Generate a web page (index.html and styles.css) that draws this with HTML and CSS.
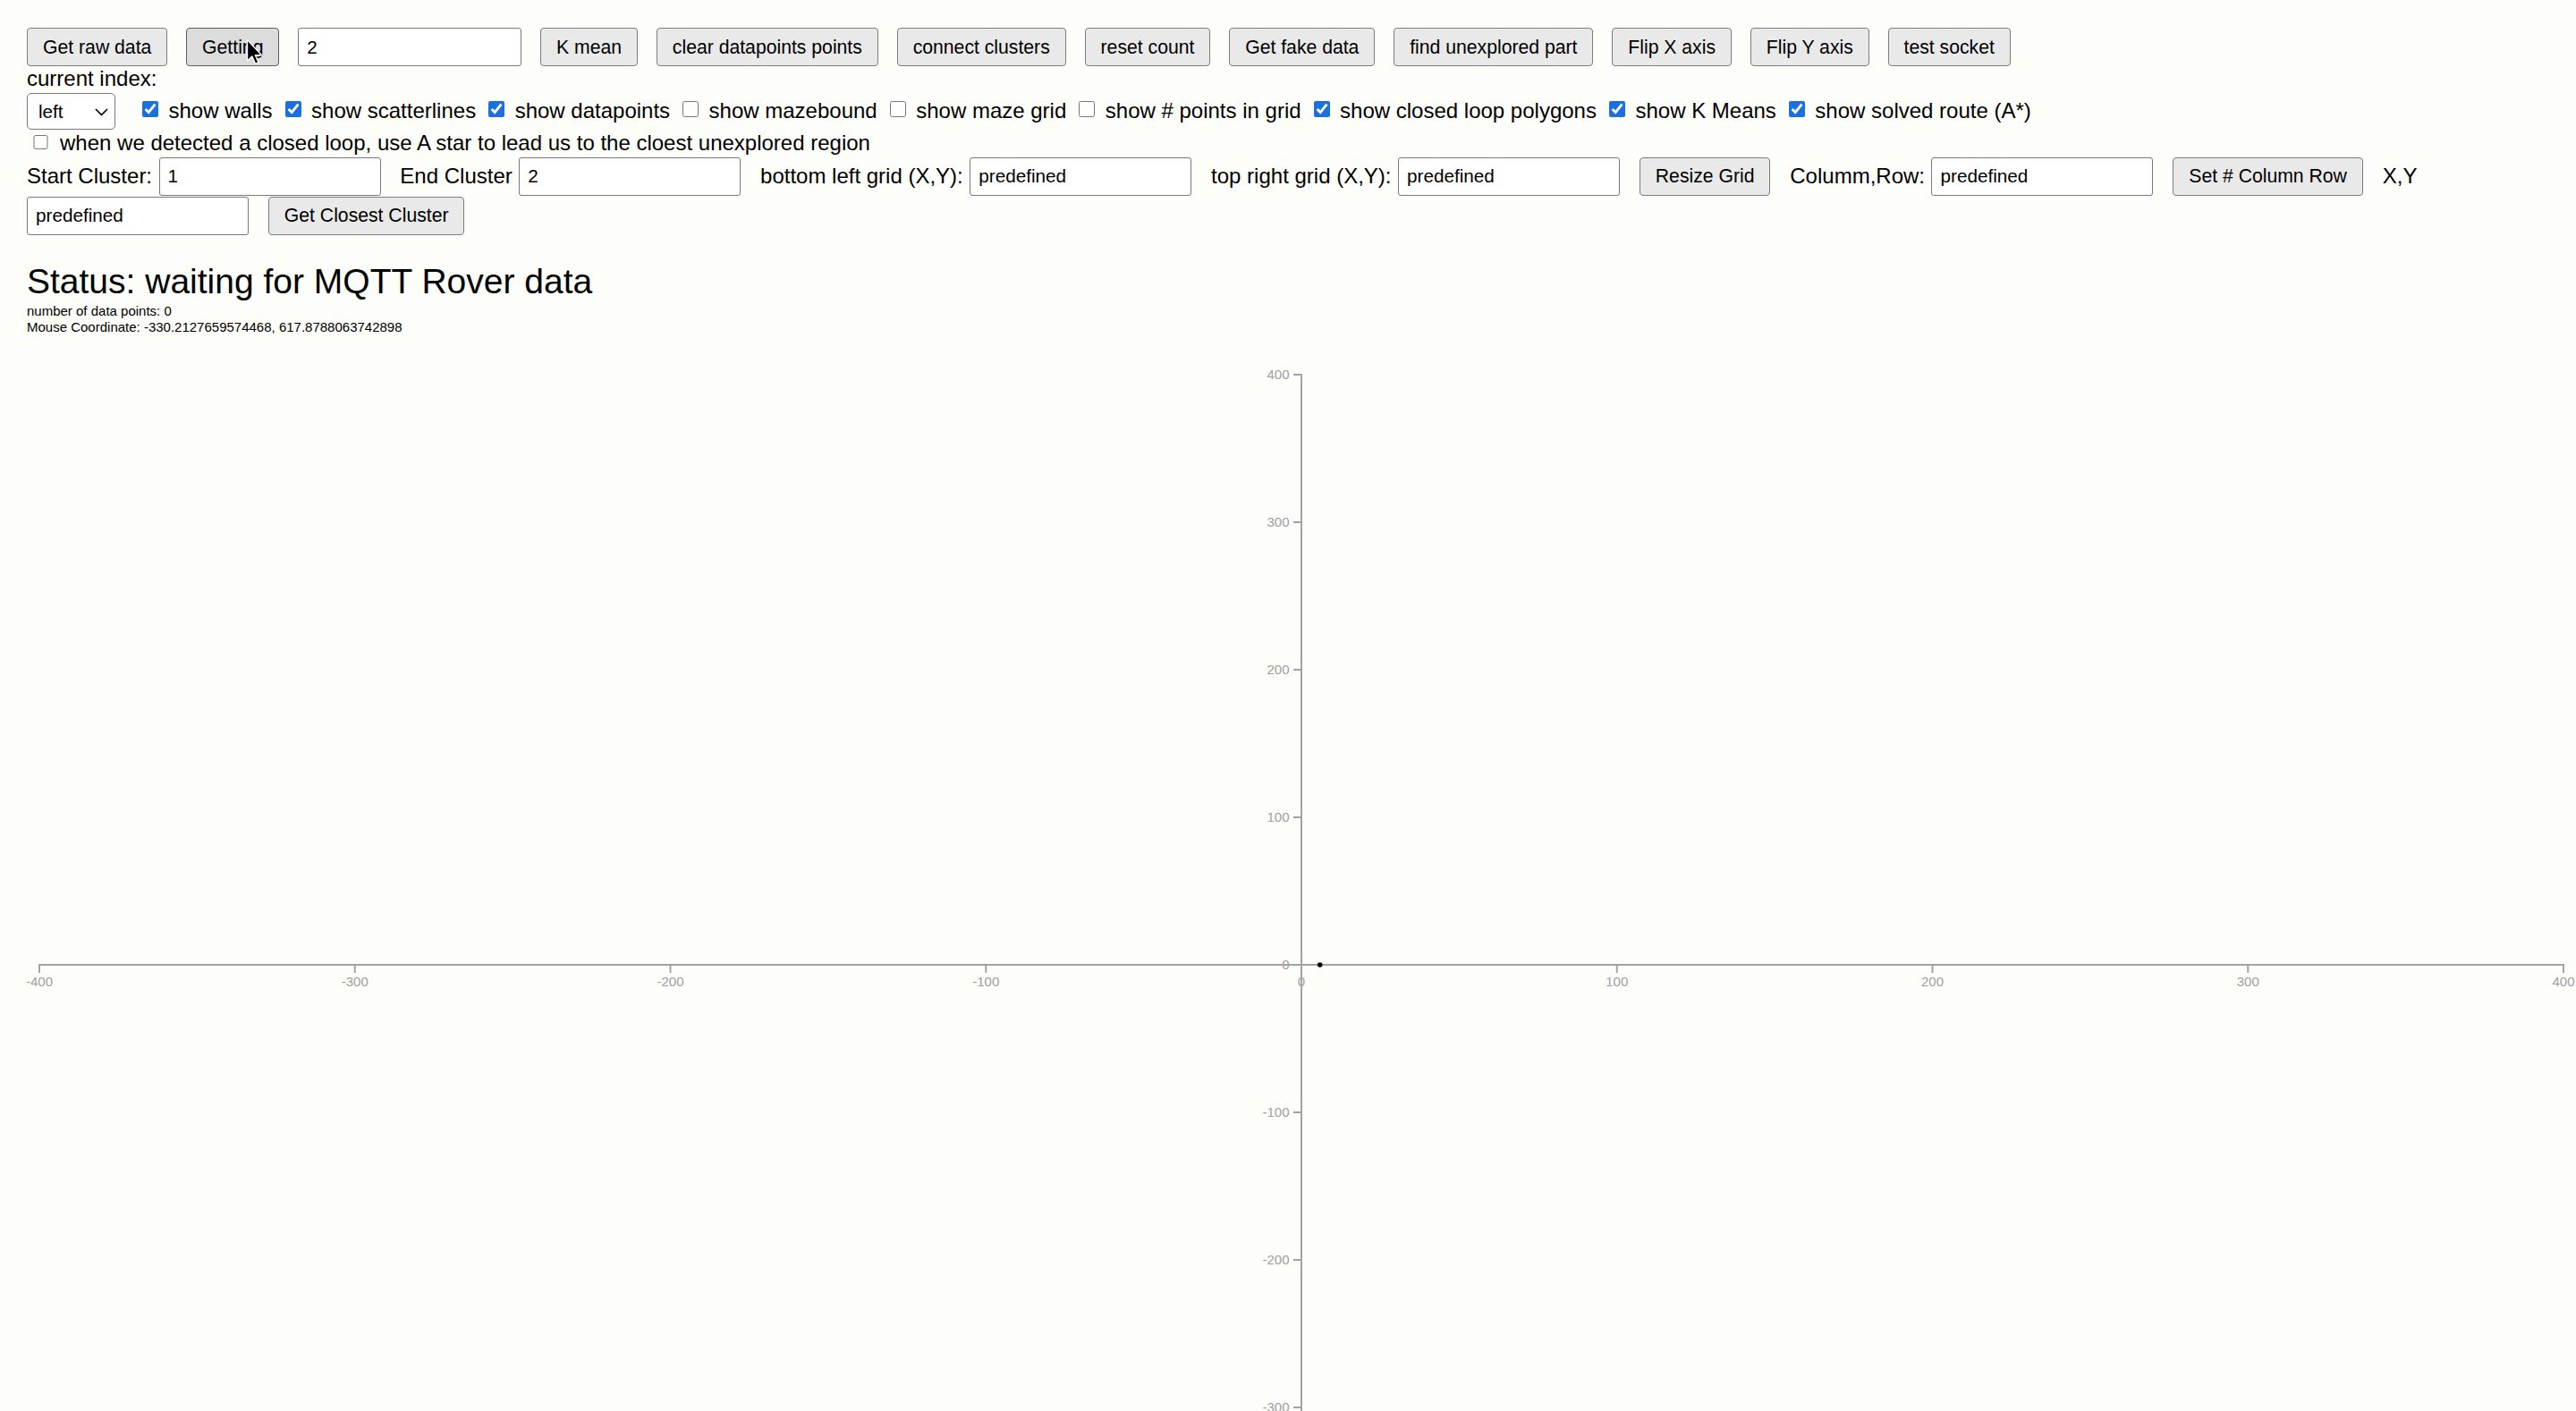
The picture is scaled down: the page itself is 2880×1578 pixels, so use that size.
FILE: index.html
```html
<!DOCTYPE html>
<html>
<head>
<meta charset="utf-8">
<title>Rover Map</title>
<link rel="stylesheet" href="styles.css">
</head>
<body>
<div class="controls">
  <div class="row buttons">
    <button class="btn">Get raw data</button>
    <span class="cursor-host">
      <button class="btn btn-hover">Getting</button>
      <svg class="cursor" width="21" height="31" viewBox="0 0 14 20.5"><path d="M1,1 L1,16.6 L4.6,13.2 L7,18.8 L9.3,17.8 L6.9,12.4 L11.7,12.4 Z" fill="#000" stroke="#fff" stroke-width="0.9" stroke-linejoin="round"/></svg>
    </span>
    <input class="field field-wide" type="text" value="2">
    <button class="btn">K mean</button>
    <button class="btn">clear datapoints points</button>
    <button class="btn">connect clusters</button>
    <button class="btn">reset count</button>
    <button class="btn">Get fake data</button>
    <button class="btn">find unexplored part</button>
    <button class="btn">Flip X axis</button>
    <button class="btn">Flip Y axis</button>
    <button class="btn">test socket</button>
  </div>
  <div class="line">current index:</div>
  <div class="row toggles">
    <span class="select-wrap">
      <select class="select"><option>left</option></select>
      <svg class="chevron" width="15" height="9" viewBox="0 0 15 9"><path d="M1,1 L7.5,7.5 L14,1" fill="none" stroke="#000" stroke-width="1.6"/></svg>
    </span>
    <label class="chk"><input type="checkbox" checked>show walls</label>
    <label class="chk"><input type="checkbox" checked>show scatterlines</label>
    <label class="chk"><input type="checkbox" checked>show datapoints</label>
    <label class="chk"><input type="checkbox">show mazebound</label>
    <label class="chk"><input type="checkbox">show maze grid</label>
    <label class="chk"><input type="checkbox">show # points in grid</label>
    <label class="chk"><input type="checkbox" checked>show closed loop polygons</label>
    <label class="chk"><input type="checkbox" checked>show K Means</label>
    <label class="chk"><input type="checkbox" checked>show solved route (A*)</label>
  </div>
  <div class="row loop">
    <label class="chk chk-loop"><input type="checkbox">when we detected a closed loop, use A star to lead us to the cloest unexplored region</label>
  </div>
  <div class="row form form-first">
    <span class="lbl">Start Cluster:</span><input class="field" type="text" value="1">
    <span class="lbl">End Cluster</span><input class="field" type="text" value="2">
    <span class="lbl">bottom left grid (X,Y):</span><input class="field" type="text" value="predefined">
    <span class="lbl">top right grid (X,Y):</span><input class="field" type="text" value="predefined">
    <button class="btn">Resize Grid</button>
    <span class="lbl">Columm,Row:</span><input class="field" type="text" value="predefined">
    <button class="btn">Set # Column Row</button>
    <span class="lbl">X,Y</span>
  </div>
  <div class="row form">
    <input class="field" type="text" value="predefined">
    <button class="btn">Get Closest Cluster</button>
  </div>
</div>

<div class="status">
  <h2 class="status-title">Status: waiting for MQTT Rover data</h2>
  <div class="meta meta-first">number of data points: 0</div>
  <div class="meta">Mouse Coordinate: -330.2127659574468, 617.8788063742898</div>
</div>

<svg class="chart" width="2880" height="1203" viewBox="0 0 2880 1203">
  <g class="axis">
    <path class="domain" d="M44,713 V704 H2866 V713"/>
    <g class="tick"><line x1="44" y1="704" x2="44" y2="713"/><text x="44" y="717.5" dy="0.71em" text-anchor="middle">-400</text></g>
    <g class="tick"><line x1="396.75" y1="704" x2="396.75" y2="713"/><text x="396.75" y="717.5" dy="0.71em" text-anchor="middle">-300</text></g>
    <g class="tick"><line x1="749.5" y1="704" x2="749.5" y2="713"/><text x="749.5" y="717.5" dy="0.71em" text-anchor="middle">-200</text></g>
    <g class="tick"><line x1="1102.25" y1="704" x2="1102.25" y2="713"/><text x="1102.25" y="717.5" dy="0.71em" text-anchor="middle">-100</text></g>
    <g class="tick"><line x1="1455" y1="704" x2="1455" y2="713"/><text x="1455" y="717.5" dy="0.71em" text-anchor="middle">0</text></g>
    <g class="tick"><line x1="1807.75" y1="704" x2="1807.75" y2="713"/><text x="1807.75" y="717.5" dy="0.71em" text-anchor="middle">100</text></g>
    <g class="tick"><line x1="2160.5" y1="704" x2="2160.5" y2="713"/><text x="2160.5" y="717.5" dy="0.71em" text-anchor="middle">200</text></g>
    <g class="tick"><line x1="2513.25" y1="704" x2="2513.25" y2="713"/><text x="2513.25" y="717.5" dy="0.71em" text-anchor="middle">300</text></g>
    <g class="tick"><line x1="2866" y1="704" x2="2866" y2="713"/><text x="2866" y="717.5" dy="0.71em" text-anchor="middle">400</text></g>
  </g>
  <g class="axis">
    <path class="domain" d="M1446,44 H1455 V1364 H1446"/>
    <g class="tick"><line x1="1446" y1="44" x2="1455" y2="44"/><text x="1441.5" y="44" dy="0.32em" text-anchor="end">400</text></g>
    <g class="tick"><line x1="1446" y1="209" x2="1455" y2="209"/><text x="1441.5" y="209" dy="0.32em" text-anchor="end">300</text></g>
    <g class="tick"><line x1="1446" y1="374" x2="1455" y2="374"/><text x="1441.5" y="374" dy="0.32em" text-anchor="end">200</text></g>
    <g class="tick"><line x1="1446" y1="539" x2="1455" y2="539"/><text x="1441.5" y="539" dy="0.32em" text-anchor="end">100</text></g>
    <g class="tick"><line x1="1446" y1="704" x2="1455" y2="704"/><text x="1441.5" y="704" dy="0.32em" text-anchor="end">0</text></g>
    <g class="tick"><line x1="1446" y1="869" x2="1455" y2="869"/><text x="1441.5" y="869" dy="0.32em" text-anchor="end">-100</text></g>
    <g class="tick"><line x1="1446" y1="1034" x2="1455" y2="1034"/><text x="1441.5" y="1034" dy="0.32em" text-anchor="end">-200</text></g>
    <g class="tick"><line x1="1446" y1="1199" x2="1455" y2="1199"/><text x="1441.5" y="1199" dy="0.32em" text-anchor="end">-300</text></g>
  </g>
  <circle class="point" cx="1475.7" cy="704" r="2.8"/>
</svg>
</body>
</html>
```

FILE: styles.css
```css
* {
  box-sizing: border-box;
}

html,
body {
  margin: 0;
  padding: 0;
  overflow: hidden;
}

body {
  width: 2880px;
  height: 1578px;
  background: #fdfdfa;
  color: #000;
  font-family: "Liberation Sans", Arial, Helvetica, sans-serif;
  font-size: 24px;
}

.controls {
  padding: 31px 0 0 30px;
}

.row {
  display: flex;
  align-items: center;
  white-space: nowrap;
}

.buttons {
  height: 43px;
  gap: 20.8px;
}

.btn {
  font-family: "Liberation Sans", Arial, Helvetica, sans-serif;
  font-size: 21.2px;
  line-height: 1;
  height: 43px;
  padding: 0 17px;
  color: #000;
  background: #e9e9e9;
  border: 1px solid #7c7c7c;
  border-radius: 4px;
}

.btn-hover {
  background: #dcdcdc;
  border-color: #5a5a5a;
}

.cursor-host {
  position: relative;
  display: inline-flex;
}

.cursor {
  position: absolute;
  left: 67px;
  top: 12px;
}

.field {
  font-family: "Liberation Sans", Arial, Helvetica, sans-serif;
  font-size: 20.7px;
  width: 248px;
  height: 43px;
  padding: 0 9px;
  color: #000;
  background: #fff;
  border: 1px solid #7a7a7a;
  border-radius: 3px;
}

.field-wide {
  width: 250px;
}

.line {
  height: 28px;
  line-height: 28px;
}

.toggles {
  height: 44px;
  gap: 14px;
}

.select-wrap {
  position: relative;
  display: inline-flex;
  margin-right: 16px;
}

.select {
  appearance: none;
  -webkit-appearance: none;
  font-family: "Liberation Sans", Arial, Helvetica, sans-serif;
  font-size: 20.7px;
  width: 99px;
  height: 41px;
  padding: 0 0 0 12px;
  color: #000;
  background: #fff;
  border: 1px solid #7a7a7a;
  border-radius: 5px;
}

.chevron {
  position: absolute;
  right: 8px;
  top: 17px;
  pointer-events: none;
}

.chk {
  display: inline-flex;
  align-items: center;
  height: 28px;
  line-height: 28px;
}

.chk input {
  width: 18px;
  height: 18px;
  margin: 0 11.5px 5px 0;
  accent-color: #1a6fe3;
}

.loop {
  height: 28px;
  padding-left: 7px;
}

.chk-loop input {
  width: 17px;
  height: 16px;
  margin: 0 13px 2px 0;
}

.form {
  height: 44px;
}

.form-first {
  margin-top: 1px;
}

.form .lbl {
  margin-right: 7.5px;
}

.form .field,
.form .btn {
  margin-right: 21.8px;
}

.status {
  padding-left: 30px;
}

.status-title {
  margin: 30px 0 0;
  font-size: 39px;
  font-weight: normal;
  line-height: 44px;
}

.meta {
  font-size: 15px;
  line-height: 18px;
}

.meta-first {
  margin-top: 2px;
}

.chart {
  display: block;
}

.axis .domain {
  fill: none;
  stroke: #a3a3a3;
  stroke-width: 2;
}

.axis line {
  stroke: #a3a3a3;
  stroke-width: 2;
}

.axis text {
  fill: #a0a0a0;
  font-family: "Liberation Sans", Arial, Helvetica, sans-serif;
  font-size: 15px;
}

.point {
  fill: #000;
}
```
